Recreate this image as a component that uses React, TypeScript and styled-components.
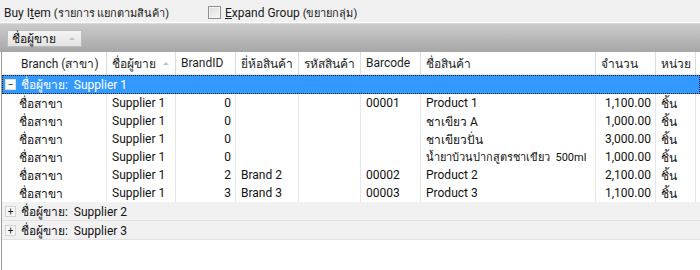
import React from 'react';
import styled, { createGlobalStyle } from 'styled-components';

const GlobalStyle = createGlobalStyle`
  html, body {
    margin: 0;
    padding: 0;
    background: #ffffff;
  }
  body {
    font-family: Roboto, 'Liberation Sans', 'Noto Sans', sans-serif;
    font-size: 12px;
    color: #000;
  }
`;

// column widths of the grid (px)
const COLS = '105px 69px 60px 63px 62px 60px 175px 60px 40px';

const Window = styled.div`
  width: 700px;
  height: 270px;
  display: flex;
  flex-direction: column;
  overflow: hidden;
  background: #ffffff;
`;

const TopBar = styled.div`
  height: 24px;
  display: flex;
  align-items: center;
  padding: 2px 0 0 4px;
  background: #f0f0f0;
  border-bottom: 1px solid #d8d8d8;
  box-shadow: inset 0 -1px 0 #ffffff;
  box-sizing: border-box;
`;

const Title = styled.span`
  width: 204px;
  color: #1a1a1a;
  white-space: nowrap;
`;

const ThaiSmall = styled.span`
  font-size: 11px;
`;

const Mnemonic = styled.span`
  text-decoration: underline;
`;

const CheckLabel = styled.label`
  display: flex;
  align-items: center;
  gap: 4px;
  color: #1a1a1a;
  white-space: nowrap;
`;

const CheckBox = styled.span`
  width: 11px;
  height: 11px;
  border: 1px solid #8e8f8f;
  background: linear-gradient(135deg, #dcdcdc 0%, #f6f6f6 100%);
  box-shadow: inset 0 0 0 1px #f4f4f4;
`;

const GroupPanel = styled.div`
  height: 28px;
  display: flex;
  align-items: center;
  padding-left: 7px;
  background: linear-gradient(#cbcbcb, #a7a7a7);
  box-sizing: border-box;
`;

const GroupChip = styled.div`
  width: 75px;
  height: 17px;
  display: flex;
  align-items: center;
  justify-content: space-between;
  padding: 0 6px 0 4px;
  box-sizing: border-box;
  background: linear-gradient(#f4f4f4, #e2e2e2);
  border: 1px solid #bdbdbd;
  color: #111;
`;

const SortArrow = styled.span`
  width: 0;
  height: 0;
  border-left: 3px solid transparent;
  border-right: 3px solid transparent;
  border-bottom: 3px solid #c4c4c4;
`;

const GridArea = styled.div`
  flex: 1;
  margin-left: 1px;
  border-left: 1px solid #9c9c9c;
  background: #ffffff;
`;

const HeaderRow = styled.div`
  display: grid;
  grid-template-columns: ${COLS};
  height: 23px;
  background: #ffffff;
  border-bottom: 1px solid #e4e4e4;
  box-sizing: border-box;
`;

const HeaderCell = styled.div<{ $first?: boolean }>`
  display: flex;
  align-items: center;
  justify-content: space-between;
  padding: 0 6px 0 ${p => (p.$first ? '19px' : '5px')};
  border-right: 1px solid #dcdcdc;
  color: #1e1e1e;
  white-space: nowrap;
  overflow: hidden;
`;

const GroupRow = styled.div<{ $active?: boolean }>`
  height: 19px;
  display: flex;
  align-items: center;
  gap: 5px;
  padding-left: 3px;
  box-sizing: border-box;
  white-space: nowrap;
  ${p =>
    p.$active
      ? `
    background: #3399ff;
    color: #ffffff;
    outline: 1px dotted #1a1a1a;
    outline-offset: -1px;
  `
      : `
    background: #f1f1f1;
    color: #111;
    border-bottom: 1px solid #e2e2e2;
  `}
`;

const Expander = styled.span<{ $active?: boolean }>`
  width: 9px;
  height: 9px;
  display: flex;
  align-items: center;
  justify-content: center;
  font-size: 10px;
  line-height: 9px;
  color: #222;
  background: ${p => (p.$active ? '#ffffff' : '#f7f7f7')};
  border: 1px solid ${p => (p.$active ? '#e0e0e0' : '#d4d4d4')};
`;

const DataRow = styled.div`
  display: grid;
  grid-template-columns: ${COLS};
  height: 18px;
`;

const Cell = styled.div<{ $align?: 'left' | 'right'; $first?: boolean; $compact?: boolean }>`
  display: flex;
  align-items: center;
  justify-content: ${p => (p.$align === 'right' ? 'flex-end' : 'flex-start')};
  padding: 0 4px 0 ${p => (p.$first ? '17px' : '5px')};
  border-right: 1px solid ${p => (p.$first ? '#ebebeb' : '#e6e6e6')};
  font-size: ${p => (p.$compact ? '11px' : '12px')};
  white-space: pre;
  overflow: hidden;
  color: #111;
`;

type Item = {
  branch: string;
  supplier: string;
  brandId: number;
  brand: string;
  code: string;
  barcode: string;
  name: string;
  qty: string;
  unit: string;
  long?: boolean;
};

const items: Item[] = [
  { branch: 'ชื่อสาขา', supplier: 'Supplier 1', brandId: 0, brand: '', code: '', barcode: '00001', name: 'Product 1', qty: '1,100.00', unit: 'ชิ้น' },
  { branch: 'ชื่อสาขา', supplier: 'Supplier 1', brandId: 0, brand: '', code: '', barcode: '', name: 'ชาเขียว A', qty: '1,000.00', unit: 'ชิ้น' },
  { branch: 'ชื่อสาขา', supplier: 'Supplier 1', brandId: 0, brand: '', code: '', barcode: '', name: 'ชาเขียวปั่น', qty: '3,000.00', unit: 'ชิ้น' },
  { branch: 'ชื่อสาขา', supplier: 'Supplier 1', brandId: 0, brand: '', code: '', barcode: '', name: 'น้ำยาบ้วนปากสูตรชาเขียว  500ml', qty: '1,000.00', unit: 'ชิ้น', long: true },
  { branch: 'ชื่อสาขา', supplier: 'Supplier 1', brandId: 2, brand: 'Brand 2', code: '', barcode: '00002', name: 'Product 2', qty: '2,100.00', unit: 'ชิ้น' },
  { branch: 'ชื่อสาขา', supplier: 'Supplier 1', brandId: 3, brand: 'Brand 3', code: '', barcode: '00003', name: 'Product 3', qty: '1,100.00', unit: 'ชิ้น' },
];

const headers = ['Branch (สาขา)', 'ชื่อผู้ขาย', 'BrandID', 'ยี่ห้อสินค้า', 'รหัสสินค้า', 'Barcode', 'ชื่อสินค้า', 'จำนวน', 'หน่วย'];

const App: React.FC = () => {
  return (
    <>
      <GlobalStyle />
      <Window>
        <TopBar>
          <Title>
            Buy I<Mnemonic>t</Mnemonic>em <ThaiSmall>(รายการ แยกตามสินค้า)</ThaiSmall>
          </Title>
          <CheckLabel>
            <CheckBox />
            <span>
              <Mnemonic>E</Mnemonic>xpand Group <ThaiSmall>(ขยายกลุ่ม)</ThaiSmall>
            </span>
          </CheckLabel>
        </TopBar>

        <GroupPanel>
          <GroupChip>
            <span>ชื่อผู้ขาย</span>
            <SortArrow />
          </GroupChip>
        </GroupPanel>

        <GridArea>
          <HeaderRow>
            {headers.map((h, i) => (
              <HeaderCell key={h} $first={i === 0}>
                <span>{h}</span>
                {i === 1 && <SortArrow />}
              </HeaderCell>
            ))}
          </HeaderRow>

          <GroupRow $active>
            <Expander $active>−</Expander>
            <span>ชื่อผู้ขาย:&nbsp; Supplier 1</span>
          </GroupRow>

          {items.map((it, i) => (
            <DataRow key={i}>
              <Cell $first>{it.branch}</Cell>
              <Cell>{it.supplier}</Cell>
              <Cell $align="right">{it.brandId}</Cell>
              <Cell>{it.brand}</Cell>
              <Cell>{it.code}</Cell>
              <Cell>{it.barcode}</Cell>
              <Cell $compact={it.long}>{it.name}</Cell>
              <Cell $align="right">{it.qty}</Cell>
              <Cell>{it.unit}</Cell>
            </DataRow>
          ))}

          <GroupRow>
            <Expander>+</Expander>
            <span>ชื่อผู้ขาย:&nbsp; Supplier 2</span>
          </GroupRow>
          <GroupRow>
            <Expander>+</Expander>
            <span>ชื่อผู้ขาย:&nbsp; Supplier 3</span>
          </GroupRow>
        </GridArea>
      </Window>
    </>
  );
};

export default App;
